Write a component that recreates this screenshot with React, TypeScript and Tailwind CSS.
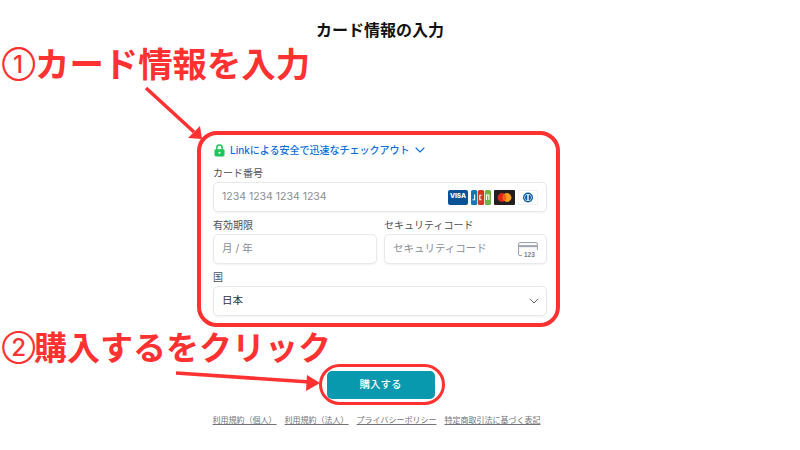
import { ChevronDown } from "lucide-react";

const FONT = "font-['Inter','Noto_Sans_CJK_JP',sans-serif]";
const inputBox =
  "flex h-[30px] items-center rounded-[5px] border border-[#e9e9e9] bg-white px-[8px] text-[10.5px] shadow-[0_1px_2px_rgba(0,0,0,0.05)]";

function Lock() {
  return (
    <svg width="11" height="13" viewBox="0 0 11 13">
      <path d="M2.8 6V3.8a2.7 2.7 0 0 1 5.4 0V6" fill="none" stroke="#1fc45a" strokeWidth="1.5" />
      <rect x="0.5" y="5.2" width="10" height="7.3" rx="1.4" fill="#1fc45a" />
      <circle cx="5.5" cy="8.8" r="1.1" fill="#fff" />
    </svg>
  );
}

function CardBrands() {
  return (
    <div className="flex items-center gap-[3px]">
      <span className="flex h-[15px] w-[20px] items-center justify-center rounded-[2px] bg-[#0b5196] text-[6.5px] font-extrabold text-white">
        VISA
      </span>
      <svg width="20" height="15" viewBox="0 0 20 15">
        <rect x="0" width="6.2" height="15" rx="1.5" fill="#1277b8" />
        <rect x="6.9" width="6.2" height="15" rx="1.5" fill="#d1381f" />
        <rect x="13.8" width="6.2" height="15" rx="1.5" fill="#6cb545" />
        <path d="M3.6 4.5v5.2H1.6M10.6 5.2H8.8v4.6h1.8M15.5 10V5h2.4v5" fill="none" stroke="#fff" strokeWidth="1.1" />
      </svg>
      <svg width="21" height="15" viewBox="0 0 21 15">
        <rect width="21" height="15" rx="1" fill="#231f20" />
        <circle cx="8" cy="7.5" r="4.4" fill="#e2231a" />
        <circle cx="13" cy="7.5" r="4.4" fill="#f79e1b" />
        <path d="M10.5 3.9a4.4 4.4 0 0 1 0 7.2a4.4 4.4 0 0 1 0-7.2z" fill="#f2601a" />
      </svg>
      <svg width="20" height="15" viewBox="0 0 20 15">
        <rect x="0.25" y="0.25" width="19.5" height="14.5" rx="1" fill="#fff" stroke="#dde3ea" strokeWidth="0.6" />
        <circle cx="10" cy="7.5" r="5" fill="#0a5ea8" />
        <circle cx="10" cy="7.5" r="3.6" fill="#fff" />
        <path d="M9.3 4.4a3.2 3.2 0 0 0 0 6.2zM10.7 4.4a3.2 3.2 0 0 1 0 6.2z" fill="#0a5ea8" />
      </svg>
    </div>
  );
}

function CvcIcon() {
  return (
    <svg width="20" height="15" viewBox="0 0 20 15">
      <path
        d="M4 13.6H1.8A1.2 1.2 0 0 1 .6 12.4V1.8A1.2 1.2 0 0 1 1.8.6h16.4A1.2 1.2 0 0 1 19.4 1.8V8"
        fill="none"
        stroke="#8a8f98"
        strokeWidth="0.9"
      />
      <rect x="0.6" y="3" width="18.8" height="2.2" fill="#a5a9b0" />
      <text x="6" y="14.6" fontSize="6.5" fontWeight="700" fill="#7a7f87" fontFamily="Liberation Sans, sans-serif">
        123
      </text>
    </svg>
  );
}

function Field({ label, children, className }: { label: string; children: React.ReactNode; className?: string }) {
  return (
    <div className={className}>
      <div className="mb-[2px] h-[14px] text-[10px] leading-[14px] text-[#4d4f55]">{label}</div>
      {children}
    </div>
  );
}

function Annotations() {
  return (
    <>
      <div className="absolute left-[2px] top-[42px] flex h-[46px] items-center leading-[46px] text-[#ff3131]">
        <span className="w-[33px] text-[24px] font-medium">①</span>
        <span className="text-[34.4px] font-bold">カード情報を入力</span>
      </div>
      <div className="absolute left-[2px] top-[325px] flex h-[46px] items-center leading-[46px] text-[#ff3131]">
        <span className="w-[32px] text-[24px] font-medium">②</span>
        <span className="text-[33px] font-bold">購入するをクリック</span>
      </div>
      <svg className="absolute left-0 top-0 pointer-events-none" width="800" height="450" viewBox="0 0 800 450">
        <path d="M146 88L194 132" stroke="#ff3131" strokeWidth="3.5" fill="none" />
        <path d="M202 139L188 138L200 126Z" fill="#ff3131" />
        <path d="M176 373L310 382" stroke="#ff3131" strokeWidth="3.5" fill="none" />
        <path d="M320 383L307 375L306 391Z" fill="#ff3131" />
      </svg>
    </>
  );
}

export default function App() {
  return (
    <div className={`relative h-[450px] w-[800px] overflow-hidden bg-white ${FONT}`}>
      <div className="flex w-[760px] flex-col items-center pt-[20px]">
        <h1 className="text-[16px] font-bold leading-[20px] text-[#111]">カード情報の入力</h1>

        <section className="relative mt-[100px] w-[334px]">
          <div className="absolute -left-[16px] -right-[13px] -top-[9px] -bottom-[11px] rounded-[20px] border-[4px] border-[#ff3131]" />
          <div className="flex h-[20px] items-center text-[10px] font-medium text-[#0a6fd8]">
            <span className="mr-[5px] ml-[1px]">
              <Lock />
            </span>
            <span>Linkによる安全で迅速なチェックアウト</span>
            <ChevronDown size={16} strokeWidth={1.6} className="ml-[3px]" />
          </div>
          <Field label="カード番号" className="mt-[6px]">
            <div className={`${inputBox} justify-between`}>
              <span className="text-[#8a8d93]">1234 1234 1234 1234</span>
              <CardBrands />
            </div>
          </Field>
          <div className="mt-[6px] flex gap-[7px]">
            <Field label="有効期限" className="w-[164px]">
              <div className={inputBox}>
                <span className="text-[#8a8d93]">月 / 年</span>
              </div>
            </Field>
            <Field label="セキュリティコード" className="w-[163px]">
              <div className={`${inputBox} justify-between`}>
                <span className="text-[#8a8d93]">セキュリティコード</span>
                <CvcIcon />
              </div>
            </Field>
          </div>
          <Field label="国" className="mt-[6px]">
            <div className={`${inputBox} justify-between text-[#30313d]`}>
              <span>日本</span>
              <ChevronDown size={16} strokeWidth={1.4} className="-mr-[4px] text-[#5a5d63]" />
            </div>
          </Field>
        </section>

        <div className="relative mt-[55px] ml-[1px]">
          <button className="block h-[28px] w-[108px] rounded-[5px] bg-[#0899ae] text-[10.5px] font-medium text-white">
            購入する
          </button>
          <div className="absolute -left-[8px] -right-[10px] -top-[7px] -bottom-[6px] rounded-full border-[3.5px] border-[#ff3131]" />
        </div>

        <nav className="mt-[15px] -ml-[7px] flex gap-[8px] text-[8px] leading-[12px] text-[#70737a] underline">
          <span>利用規約（個人）</span>
          <span>利用規約（法人）</span>
          <span>プライバシーポリシー</span>
          <span>特定商取引法に基づく表記</span>
        </nav>
      </div>
      <Annotations />
    </div>
  );
}
